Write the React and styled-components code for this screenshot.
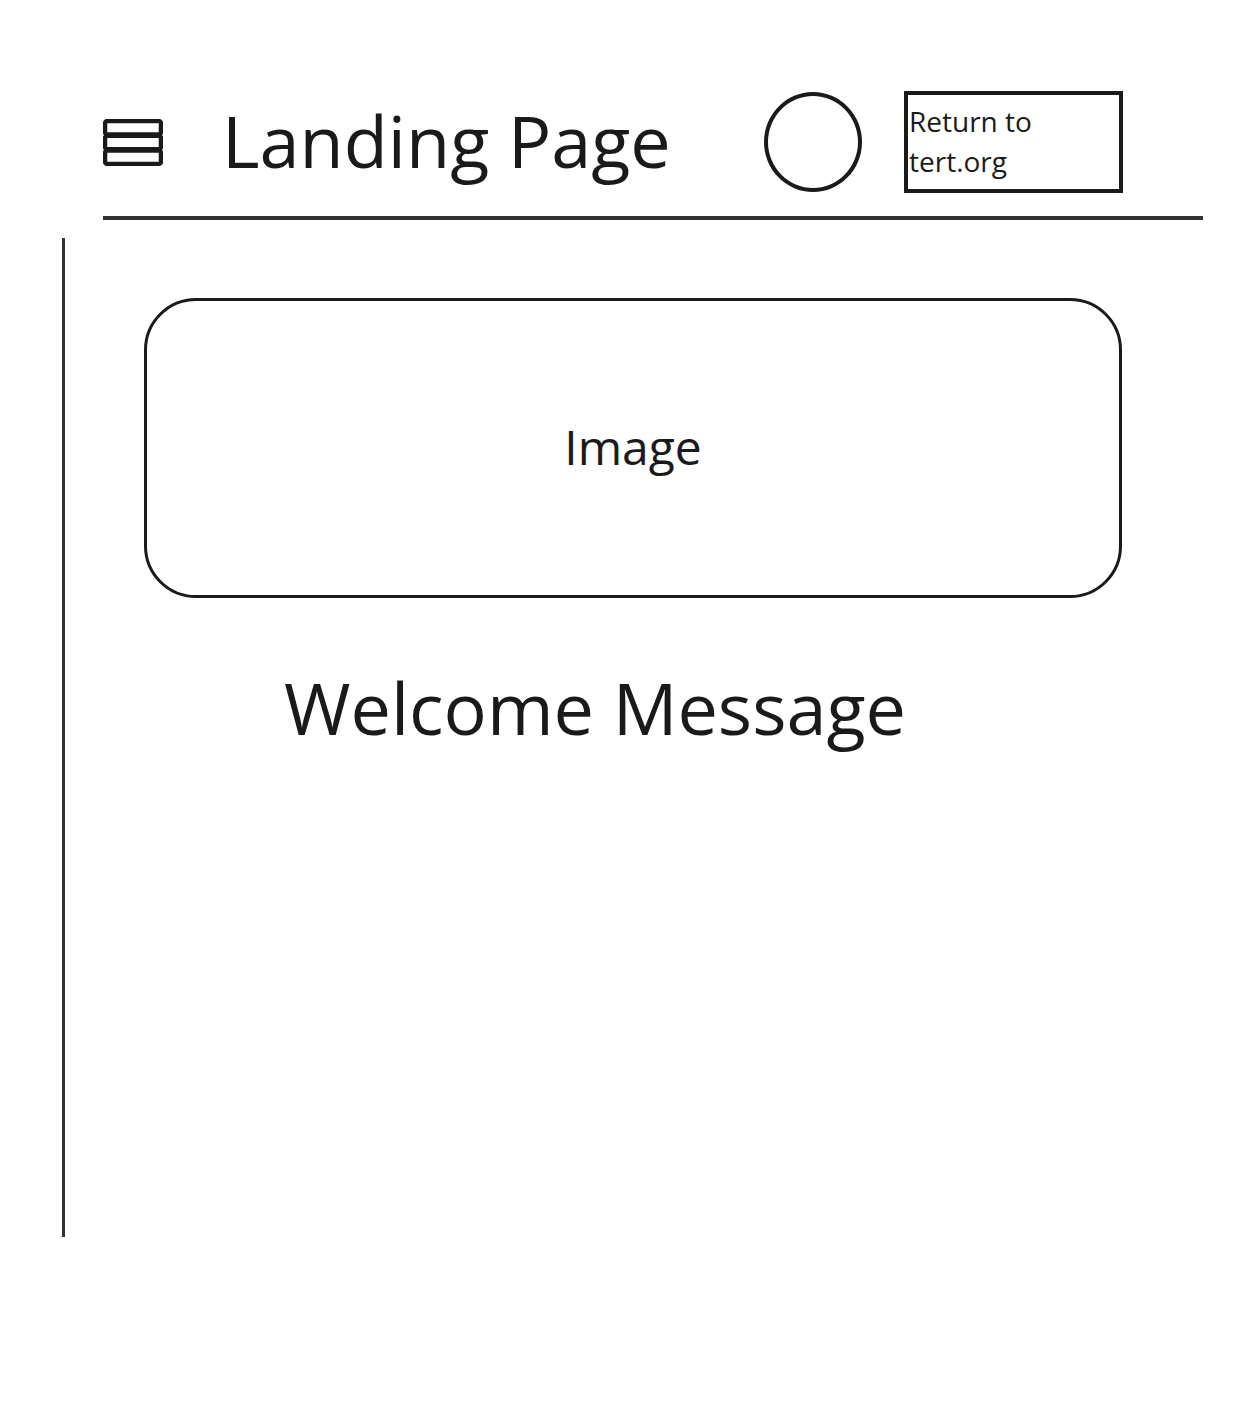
import React from 'react'
import styled, { createGlobalStyle } from 'styled-components'

const GlobalStyle = createGlobalStyle`
    html, body {
        margin: 0;
        padding: 0;
        background: #ffffff;
    }
    body {
        font-family: "Open Sans", "Noto Sans", sans-serif;
        color: #1a1a1a;
    }
`;

const Page = styled.div`
    width: 1246px;
    min-height: 1414px;
    padding-top: 91px;
    box-sizing: border-box;
`;

const Header = styled.header`
    display: flex;
    align-items: center;
    height: 102px;
    margin-left: 103px;
`;

const Title = styled.h1`
    width: 539px;
    margin: 0 0 0 59px;
    font-size: 72px;
    font-weight: 400;
    line-height: 1;
    padding-bottom: 4px;
`;

const Avatar = styled.div`
    width: 98px;
    height: 100px;
    border: 4px solid #1a1a1a;
    border-radius: 50%;
    box-sizing: border-box;
    flex-shrink: 0;
    margin-left: 3px;
`;

const ReturnLink = styled.a`
    display: block;
    align-self: flex-start;
    width: 219px;
    height: 102px;
    margin-left: 42px;
    padding: 6px 0 0 1px;
    border: 4px solid #1a1a1a;
    box-sizing: border-box;
    font-size: 28px;
    line-height: 40px;
    color: #1a1a1a;
    text-decoration: none;
`;

const Rule = styled.hr`
    width: 1100px;
    margin: 23px 0 0 103px;
    border: none;
    border-top: 4px solid #333333;
`;

const Main = styled.main`
    margin: 18px 0 0 62px;
    height: 999px;
    border-left: 3.5px solid #333333;
    padding-top: 60px;
    box-sizing: border-box;
`;

const ImageBox = styled.div`
    display: flex;
    align-items: center;
    justify-content: center;
    width: 978px;
    height: 300px;
    margin-left: 79px;
    border: 3.5px solid #1a1a1a;
    border-radius: 52px;
    box-sizing: border-box;
    font-size: 48px;
    padding-bottom: 4px;
`;

const Welcome = styled.h2`
    margin: 73px 0 0 219px;
    font-size: 72px;
    font-weight: 400;
    line-height: 1;
`;

const MenuIcon = () => (
    <svg width="60" height="47" viewBox="0 0 60 47">
        <rect x="2" y="2" width="56" height="13.5" rx="2.5" fill="none" stroke="#1a1a1a" strokeWidth="4.5" />
        <rect x="2" y="16.75" width="56" height="13.5" rx="2.5" fill="none" stroke="#1a1a1a" strokeWidth="4.5" />
        <rect x="2" y="31.5" width="56" height="13.5" rx="2.5" fill="none" stroke="#1a1a1a" strokeWidth="4.5" />
    </svg>
);

export default function App() {
    return (
        <Page>
            <GlobalStyle />
            <Header>
                <MenuIcon />
                <Title>Landing Page</Title>
                <Avatar />
                <ReturnLink href="#">Return to<br />tert.org</ReturnLink>
            </Header>
            <Rule />
            <Main>
                <ImageBox>Image</ImageBox>
                <Welcome>Welcome Message</Welcome>
            </Main>
        </Page>
    )
}
